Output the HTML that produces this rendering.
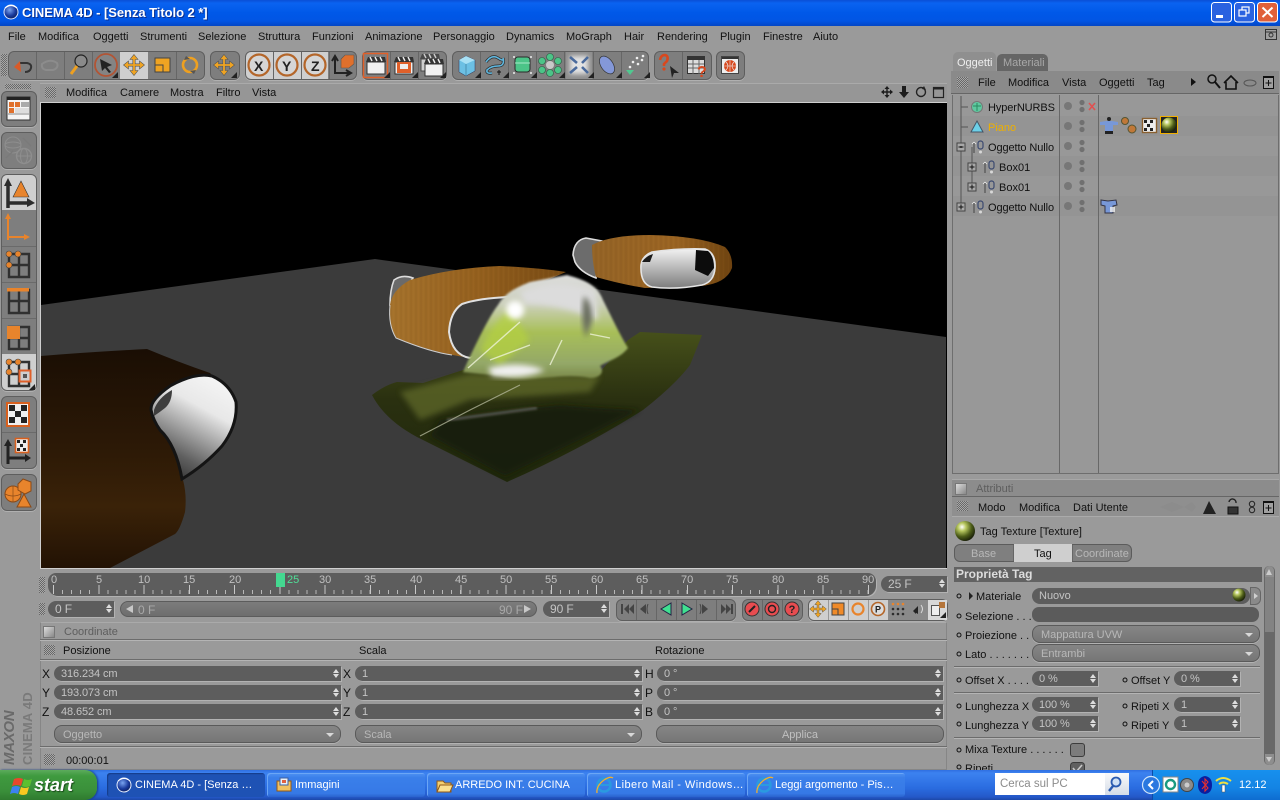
<!DOCTYPE html>
<html><head><meta charset="utf-8"><title>CINEMA 4D</title>
<style>
html,body{margin:0;padding:0;width:1280px;height:800px;overflow:hidden;background:#9a9a9a}
body{position:relative;font:11px/12px "Liberation Sans",sans-serif;color:#111}
i{font-style:normal}
.t{position:absolute;white-space:nowrap;line-height:12px;margin-top:1px}
.b{position:absolute}
.grp{position:absolute;top:51px;height:27px;background:#7e7e7e;border:1px solid #5e5e5e;border-radius:6px;box-shadow:0 1px 0 #b0b0b0}
.lit{position:absolute;background:#cfcfcf}
.grip{position:absolute;background:conic-gradient(#686868 25%,#a8a8a8 0 50%,#686868 0 75%,#a8a8a8 0);background-size:2px 2px}
.f{position:absolute;height:15px;background:#5d5d5d;border-radius:8px 0 0 8px;color:#c4c4c4;line-height:17px;padding-left:7px;box-sizing:border-box;box-shadow:1px 1px 0 #b2b2b2;letter-spacing:-.1px}
.f:before,.f:after{content:"";position:absolute;right:2px;border-left:3px solid transparent;border-right:3px solid transparent}
.f:before{top:3px;border-bottom:4px solid #ddd}
.f:after{top:8px;border-top:4px solid #ddd}
.d{position:absolute;height:18px;background:linear-gradient(#858585,#767676);border:1px solid #5a5a5a;border-radius:8px;color:#b8b8b8;line-height:18px;padding-left:8px;box-sizing:border-box;box-shadow:0 1px 0 #b2b2b2}
.d:after{content:"";position:absolute;right:6px;top:7px;border-left:4px solid transparent;border-right:4px solid transparent;border-top:4px solid #d8d8d8}
.d.n:after{display:none}
.hl{position:absolute;height:1px;background:#6c6c6c;box-shadow:0 1px 0 #b4b4b4}
.vl{position:absolute;width:1px;background:#686868}
.tb{position:absolute;top:773px;height:24px;width:158px;background:linear-gradient(#4f92f2,#3a7fea 20%,#3679e6 85%,#2a62cc);border-radius:3px;color:#fff;font-size:11px;line-height:24px;box-sizing:border-box;padding-left:28px;white-space:nowrap;overflow:hidden;box-shadow:inset 1px 1px 0 #6ba6f6}
.sep{position:absolute;width:1px;background:#666}
</style></head>
<body>
<!-- title bar -->
<div class="b" style="left:0;top:0;width:1280px;height:26px;background:linear-gradient(#0a4fd6,#0a63f0 12%,#0058e8 50%,#0155e4 80%,#0446c4)"></div>
<div class="t" style="left:22px;top:4px;color:#fff;font:bold 13px/16px 'Liberation Sans',sans-serif;letter-spacing:-.05px;text-shadow:1px 1px 0 #0a2f90">CINEMA 4D - [Senza Titolo 2 *]</div>

<!-- menu -->
<i class="t" style="left:8px;top:30px">File</i><i class="t" style="left:38px;top:30px">Modifica</i><i class="t" style="left:93px;top:30px">Oggetti</i><i class="t" style="left:140px;top:30px">Strumenti</i><i class="t" style="left:198px;top:30px">Selezione</i><i class="t" style="left:258px;top:30px">Struttura</i><i class="t" style="left:312px;top:30px">Funzioni</i><i class="t" style="left:365px;top:30px">Animazione</i><i class="t" style="left:433px;top:30px">Personaggio</i><i class="t" style="left:506px;top:30px">Dynamics</i><i class="t" style="left:566px;top:30px">MoGraph</i><i class="t" style="left:624px;top:30px">Hair</i><i class="t" style="left:657px;top:30px">Rendering</i><i class="t" style="left:720px;top:30px">Plugin</i><i class="t" style="left:763px;top:30px">Finestre</i><i class="t" style="left:813px;top:30px">Aiuto</i>

<!-- top toolbar -->
<div class="grip" style="left:1px;top:54px;width:6px;height:22px"></div>
<div class="grp" style="left:8px;width:195px"></div>
<div class="lit" style="left:120px;top:52px;width:28px;height:27px"></div>
<div class="grp" style="left:210px;width:28px"></div>
<div class="grp" style="left:245px;width:110px"></div>
<div class="lit" style="left:246px;top:52px;width:82px;height:27px;border-radius:5px 0 0 5px"></div>
<div class="grp" style="left:362px;width:83px"></div>
<div class="grp" style="left:452px;width:195px"></div>
<div class="lit" style="left:566px;top:52px;width:26px;height:27px;background:#8e8e8e"></div>
<div class="grp" style="left:654px;width:56px"></div>
<div class="grp" style="left:716px;width:27px"></div>
<div class="sep" style="left:36px;top:52px;height:27px"></div><div class="sep" style="left:64px;top:52px;height:27px"></div><div class="sep" style="left:92px;top:52px;height:27px"></div><div class="sep" style="left:176px;top:52px;height:27px"></div>
<div class="sep" style="left:273px;top:52px;height:27px"></div><div class="sep" style="left:301px;top:52px;height:27px"></div><div class="sep" style="left:329px;top:52px;height:27px"></div>
<div class="sep" style="left:390px;top:52px;height:27px"></div><div class="sep" style="left:418px;top:52px;height:27px"></div>
<div class="sep" style="left:480px;top:52px;height:27px"></div><div class="sep" style="left:508px;top:52px;height:27px"></div><div class="sep" style="left:536px;top:52px;height:27px"></div><div class="sep" style="left:564px;top:52px;height:27px"></div><div class="sep" style="left:593px;top:52px;height:27px"></div><div class="sep" style="left:621px;top:52px;height:27px"></div>
<div class="sep" style="left:682px;top:52px;height:27px"></div>

<!-- left toolbar -->
<div class="grip" style="left:5px;top:84px;width:26px;height:5px"></div>
<div class="grp" style="left:1px;top:91px;width:34px;height:34px"></div>
<div class="grp" style="left:1px;top:132px;width:34px;height:35px"></div>
<div class="grp" style="left:1px;top:174px;width:34px;height:215px"></div>
<div class="lit" style="left:2px;top:175px;width:34px;height:35px;border-radius:5px 5px 0 0"></div>
<div class="lit" style="left:2px;top:354px;width:34px;height:36px;border-radius:0 0 5px 5px"></div>
<div class="hl" style="left:2px;top:246px;width:34px;background:#6a6a6a;box-shadow:none"></div><div class="hl" style="left:2px;top:282px;width:34px;background:#6a6a6a;box-shadow:none"></div><div class="hl" style="left:2px;top:318px;width:34px;background:#6a6a6a;box-shadow:none"></div>
<div class="grp" style="left:1px;top:396px;width:34px;height:71px"></div>
<div class="hl" style="left:2px;top:432px;width:34px;background:#6a6a6a;box-shadow:none"></div>
<div class="grp" style="left:1px;top:474px;width:34px;height:35px"></div>

<!-- viewport header -->
<div class="b" style="left:40px;top:83px;width:907px;height:20px;background:#969696;border-top:1px solid #aaa;box-sizing:border-box"></div>
<div class="grip" style="left:45px;top:87px;width:11px;height:11px"></div>
<i class="t" style="left:66px;top:86px">Modifica</i><i class="t" style="left:120px;top:86px">Camere</i><i class="t" style="left:170px;top:86px">Mostra</i><i class="t" style="left:216px;top:86px">Filtro</i><i class="t" style="left:252px;top:86px">Vista</i>

<!-- viewport -->
<svg class="b" style="left:40px;top:102px;border:1px solid #cfcfcf;border-right:0" width="906" height="465" viewBox="41 103 906 465">
<defs>
<linearGradient id="wood" x1="0" y1="0" x2="1" y2="0"><stop offset="0" stop-color="#a5722c"/><stop offset=".5" stop-color="#94601e"/><stop offset="1" stop-color="#774a14"/></linearGradient>
<linearGradient id="woodB" x1="0" y1="0" x2="1" y2="0"><stop offset="0" stop-color="#946426"/><stop offset=".6" stop-color="#9a6422"/><stop offset="1" stop-color="#6e4310"/></linearGradient>
<linearGradient id="woodF" x1="0" y1="0" x2="0" y2="1"><stop offset="0" stop-color="#1a0e04"/><stop offset=".45" stop-color="#2c1906"/><stop offset=".72" stop-color="#3a2208"/><stop offset="1" stop-color="#221204"/></linearGradient>
<linearGradient id="hole" x1=".78" y1=".05" x2=".35" y2="1"><stop offset="0" stop-color="#f4f4f4"/><stop offset=".3" stop-color="#e8e8e8"/><stop offset=".55" stop-color="#a4a4a4"/><stop offset=".8" stop-color="#606060"/><stop offset="1" stop-color="#3a3a3a"/></linearGradient>
<linearGradient id="hole2" x1="0" y1="0" x2="0" y2="1"><stop offset="0" stop-color="#f2f2f2"/><stop offset="1" stop-color="#7c7c7c"/></linearGradient>
<linearGradient id="hill" x1="0" y1="0" x2="0" y2="1"><stop offset="0" stop-color="#dcdcdc"/><stop offset=".28" stop-color="#ccd0bc"/><stop offset=".55" stop-color="#a8bf58"/><stop offset=".85" stop-color="#94a868"/><stop offset="1" stop-color="#7a8848"/></linearGradient>
<linearGradient id="cloth" x1="0" y1="0" x2="0" y2="1"><stop offset="0" stop-color="#46501a"/><stop offset=".45" stop-color="#2a3010"/><stop offset="1" stop-color="#20280c"/></linearGradient>
<pattern id="gr" width="5" height="120" patternUnits="userSpaceOnUse"><rect width="2" height="120" fill="#5a3208" opacity=".1"/><rect x="3" width="1" height="120" fill="#d09a50" opacity=".08"/></pattern>
<filter id="bl" x="-30%" y="-30%" width="160%" height="160%"><feGaussianBlur stdDeviation="3"/></filter>
<filter id="bl1"><feGaussianBlur stdDeviation="1"/></filter>
</defs>
<rect x="41" y="103" width="906" height="465" fill="#000"/>
<path d="M41 305 L375 259 L946 337 V568 H41Z" fill="#3b3b3b"/>
<!-- back chair -->
<path d="M573 255 Q574 240 586 238 L602 241 L596 278 Q580 272 575 262Z" fill="#6c6c6c" stroke="#ddd" stroke-width="1.6"/>
<path d="M592 245 Q610 235 650 235 Q700 236 725 247 Q733 255 732 268 Q726 284 700 286 L645 288 Q620 284 596 277 Q592 262 592 245Z" fill="url(#woodB)"/>
<path d="M592 245 Q610 235 650 235 Q700 236 725 247 Q733 255 732 268 Q726 284 700 286 L645 288 Q620 284 596 277 Q592 262 592 245Z" fill="url(#gr)" opacity=".5"/>
<path d="M641 265 Q642 256 652 252 Q680 248 705 249 Q716 253 715 268 Q714 282 702 285 Q675 290 652 287 Q640 284 641 265Z" fill="url(#hole2)" stroke="#e4e4e4" stroke-width="1.6"/>
<path d="M696 250 L708 251 Q714 256 714 268 L708 276 L695 270Z" fill="#0c0c0c"/>
<path d="M642 262 Q646 256 653 254 L650 262Z" fill="#1a1a1a"/>
<!-- front-mid chair -->
<path d="M390 305 Q390 290 394 280 Q402 274 413 278 L396 302Z" fill="#6a6a6a" stroke="#dcdcdc" stroke-width="1.6"/>
<path d="M390 305 Q392 290 410 280 Q450 268 500 266 Q540 268 566 272 L500 300 L470 358 Q430 352 396 338 Q388 325 390 305Z" fill="url(#wood)"/>
<path d="M390 305 Q392 290 410 280 Q450 268 500 266 Q540 268 566 272 L500 300 L470 358 Q430 352 396 338 Q388 325 390 305Z" fill="url(#gr)" opacity=".5"/>
<path d="M390 305 Q388 325 396 338 Q430 352 452 355" fill="none" stroke="#cfcfcf" stroke-width="1"/>
<path d="M449 332 Q450 312 462 304 Q480 298 510 297 L500 345 L470 358 Q452 355 449 332Z" fill="#3c3c3c" stroke="#e0e0e0" stroke-width="2"/>
<!-- cloth -->
<path d="M372 395 Q385 385 397 382 L423 383 L463 370 L560 370 L600 372 L628 340 L640 332 L702 335 L690 365 Q675 385 643 410 Q580 450 507 482 L417 437 Q385 420 372 395Z" fill="url(#cloth)"/>
<path d="M400 392 L470 374 L600 376 L590 392 L470 400 L420 420Z" fill="#626c2c" opacity=".7" filter="url(#bl)"/>
<path d="M440 420 Q500 410 560 405 Q600 408 640 410 L600 430 L505 476 L430 436Z" fill="#141a08" opacity=".85" filter="url(#bl)"/>
<path d="M447 420 L537 408" stroke="#777" stroke-width="3" opacity=".55" filter="url(#bl1)"/>
<path d="M420 436 L470 410 L520 385" stroke="#b8bca0" stroke-width="1.2" opacity=".75"/>
<path d="M463 372 C475 345 490 315 498 305 C505 293 515 288 530 282 L567 275 C585 280 597 285 603 300 C612 318 620 335 628 348 C620 358 610 360 600 366 C605 372 600 378 590 378 C560 372 530 384 500 376Z" fill="url(#hill)" filter="url(#bl1)"/>
<path d="M480 350 Q495 320 510 310 L530 340 L500 365Z" fill="#b4d040" opacity=".75" filter="url(#bl)"/>
<path d="M520 292 Q555 276 595 290 L598 320 Q560 304 525 304Z" fill="#dcdcdc" filter="url(#bl)"/>
<path d="M584 296 Q592 302 592 320 L586 338 Q580 318 584 296Z" fill="#666a5c" filter="url(#bl)"/>
<path d="M488 368 Q520 360 545 370 Q525 380 492 376Z" fill="#f0f0f0" filter="url(#bl)"/>
<path d="M468 368 L520 322 M530 345 L490 360 M550 365 L562 340 M610 338 L590 334" stroke="#eef2d8" stroke-width="1.4" fill="none" opacity=".8"/>
<circle cx="515" cy="310" r="9" fill="#fff" filter="url(#bl)"/>
<!-- foreground chair -->
<path d="M41 356 Q90 352 147 349 Q178 362 210 373 L236 400 Q235 440 205 462 L183 480 Q187 495 185 512 Q180 530 175 534 L110 568 H41Z" fill="url(#woodF)"/>
<path d="M151 410 Q150 400 170 386 Q195 372 212 376 Q230 384 236 402 Q238 425 222 446 Q205 465 182 479 Q176 445 160 430 Q153 420 151 410Z" fill="url(#hole)" stroke="#141414" stroke-width="3"/>
<path d="M154 410 Q158 398 172 390 Q172 402 165 408 Q160 412 154 416Z" fill="#3e3e3e"/>
</svg>

<!-- right top panel -->
<div class="b" style="left:953px;top:52px;width:43px;height:20px;background:#8f8f8f;border-radius:5px 5px 0 0"></div>
<div class="b" style="left:997px;top:54px;width:51px;height:18px;background:#656565;border-radius:5px 5px 0 0"></div>
<i class="t" style="left:957px;top:56px;color:#eee">Oggetti</i><i class="t" style="left:1003px;top:56px;color:#a8a8a8">Materiali</i>
<div class="b" style="left:951px;top:71px;width:328px;height:23px;background:#8a8a8a;border-bottom:1px solid #666;box-sizing:border-box"></div>
<div class="grip" style="left:957px;top:77px;width:11px;height:11px"></div>
<i class="t" style="left:978px;top:76px">File</i><i class="t" style="left:1008px;top:76px">Modifica</i><i class="t" style="left:1062px;top:76px">Vista</i><i class="t" style="left:1099px;top:76px">Oggetti</i><i class="t" style="left:1147px;top:76px">Tag</i>
<div class="b" style="left:952px;top:95px;width:327px;height:379px;background:#989898;border:1px solid #6e6e6e;border-top:0;box-sizing:border-box"></div>
<div class="b" style="left:953px;top:116px;width:325px;height:20px;background:#949494"></div>
<div class="b" style="left:953px;top:156px;width:325px;height:20px;background:#949494"></div>
<div class="b" style="left:953px;top:196px;width:325px;height:20px;background:#949494"></div>
<div class="vl" style="left:1059px;top:95px;height:378px"></div><div class="vl" style="left:1098px;top:95px;height:378px"></div>
<i class="t" style="left:988px;top:101px;letter-spacing:-.1px">HyperNURBS</i>
<i class="t" style="left:988px;top:121px;color:#eeb000">Piano</i>
<i class="t" style="left:988px;top:141px;letter-spacing:-.1px">Oggetto Nullo</i>
<i class="t" style="left:999px;top:161px">Box01</i>
<i class="t" style="left:999px;top:181px">Box01</i>
<i class="t" style="left:988px;top:201px;letter-spacing:-.1px">Oggetto Nullo</i>

<!-- attributes panel -->
<div class="b" style="left:952px;top:479px;width:327px;height:18px;background:#8c8c8c;border-top:1px solid #a8a8a8;border-bottom:1px solid #666;box-sizing:border-box"></div>
<div class="b" style="left:955px;top:483px;width:10px;height:10px;background:linear-gradient(135deg,#ddd,#888);border:1px solid #777"></div>
<i class="t" style="left:976px;top:482px;color:#5e5e5e">Attributi</i>
<div class="b" style="left:952px;top:497px;width:327px;height:20px;background:#8f8f8f;border-bottom:1px solid #aaa;box-sizing:border-box"></div>
<div class="grip" style="left:957px;top:501px;width:11px;height:10px"></div>
<i class="t" style="left:978px;top:501px">Modo</i><i class="t" style="left:1019px;top:501px">Modifica</i><i class="t" style="left:1073px;top:501px">Dati Utente</i>
<i class="t" style="left:980px;top:525px">Tag Texture [Texture]</i>
<div class="b" style="left:954px;top:544px;width:178px;height:18px;background:#7f7f7f;border:1px solid #5c5c5c;border-radius:6px;box-sizing:border-box"></div>
<div class="b" style="left:1014px;top:544px;width:58px;height:18px;background:#cfcfcf"></div>
<div class="sep" style="left:1013px;top:545px;height:16px"></div><div class="sep" style="left:1072px;top:545px;height:16px"></div>
<i class="t" style="left:971px;top:547px;color:#b8b8b8">Base</i><i class="t" style="left:1034px;top:547px">Tag</i><i class="t" style="left:1075px;top:547px;color:#b8b8b8">Coordinate</i>
<div class="b" style="left:954px;top:567px;width:308px;height:15px;background:#626262"></div>
<i class="t" style="left:956px;top:567px;color:#ddd;font-weight:bold;font-size:12px">Proprietà Tag</i>
<!-- scrollbar -->
<div class="b" style="left:1264px;top:566px;width:11px;height:199px;background:#686868;border-radius:5px"></div>
<div class="b" style="left:1265px;top:577px;width:9px;height:55px;background:#838383"></div>
<div class="b" style="left:1265px;top:566px;width:9px;height:11px;background:#8e8e8e;border-radius:5px 5px 0 0"></div>
<div class="b" style="left:1265px;top:754px;width:9px;height:11px;background:#8e8e8e;border-radius:0 0 5px 5px"></div>

<i class="t" style="left:976px;top:590px">Materiale</i>
<div class="b" style="left:1032px;top:588px;width:218px;height:16px;border-radius:8px;background:#5d5d5d;color:#c4c4c4;line-height:17px;padding-left:7px;box-sizing:border-box">Nuovo</div>
<div class="b" style="left:1250px;top:587px;width:11px;height:18px;background:#8a8a8a;border:1px solid #666;border-radius:0 6px 6px 0;box-sizing:border-box"></div>
<i class="t" style="left:965px;top:610px">Selezione . . .</i>
<div class="b" style="left:1032px;top:607px;width:227px;height:15px;background:#5b5b5b;border-radius:7px"></div>
<i class="t" style="left:965px;top:629px">Proiezione . .</i>
<div class="d" style="left:1032px;top:625px;width:228px">Mappatura UVW</div>
<i class="t" style="left:965px;top:648px">Lato . . . . . . .</i>
<div class="d" style="left:1032px;top:644px;width:228px">Entrambi</div>
<div class="hl" style="left:954px;top:666px;width:306px"></div>
<i class="t" style="left:965px;top:674px">Offset X . . . .</i><div class="f" style="left:1032px;top:671px;width:66px">0 %</div>
<i class="t" style="left:1131px;top:674px">Offset Y</i><div class="f" style="left:1174px;top:671px;width:66px">0 %</div>
<div class="hl" style="left:954px;top:692px;width:306px"></div>
<i class="t" style="left:965px;top:700px">Lunghezza X</i><div class="f" style="left:1032px;top:697px;width:66px">100 %</div>
<i class="t" style="left:1131px;top:700px">Ripeti X</i><div class="f" style="left:1174px;top:697px;width:66px">1</div>
<i class="t" style="left:965px;top:719px">Lunghezza Y</i><div class="f" style="left:1032px;top:716px;width:66px">100 %</div>
<i class="t" style="left:1131px;top:719px">Ripeti Y</i><div class="f" style="left:1174px;top:716px;width:66px">1</div>
<div class="hl" style="left:954px;top:737px;width:306px"></div>
<i class="t" style="left:965px;top:743px">Mixa Texture . . . . . .</i>
<div class="b" style="left:1070px;top:743px;width:13px;height:12px;background:#7c7c7c;border:1px solid #3c3c3c;border-radius:3px"></div>
<i class="t" style="left:965px;top:762px">Ripeti</i>
<svg class="b" style="left:1070px;top:762px" width="15" height="14"><rect x=".5" y=".5" width="14" height="13" rx="3" fill="#606060" stroke="#3c3c3c"/><path d="M3 6 6 10 12 3" fill="none" stroke="#c8c8c8" stroke-width="1.600"/></svg>

<!-- timeline -->
<div class="grip" style="left:39px;top:577px;width:6px;height:16px"></div>
<div class="b" style="left:48px;top:573px;width:828px;height:23px;background:#5d5d5d;border-radius:8px 8px 10px 10px;box-shadow:1px 1px 0 #b2b2b2"></div>
<div class="b" style="left:53px;top:590px;width:816px;height:4px;background:repeating-linear-gradient(90deg,#b8b8b8 0 1px,transparent 1px 9.05px)"></div>
<div class="b" style="left:53px;top:585px;width:816px;height:9px;background:repeating-linear-gradient(90deg,#c8c8c8 0 1px,transparent 1px 45.27px)"></div>
<div class="b" style="left:276px;top:573px;width:9px;height:14px;background:#44d890"></div>
<i class="t" style="left:51px;top:573px;color:#c0c0c0">0</i><i class="t" style="left:96px;top:573px;color:#c0c0c0">5</i><i class="t" style="left:138px;top:573px;color:#c0c0c0">10</i><i class="t" style="left:183px;top:573px;color:#c0c0c0">15</i><i class="t" style="left:229px;top:573px;color:#c0c0c0">20</i><i class="t" style="left:287px;top:573px;color:#50e098">25</i><i class="t" style="left:319px;top:573px;color:#c0c0c0">30</i><i class="t" style="left:364px;top:573px;color:#c0c0c0">35</i><i class="t" style="left:410px;top:573px;color:#c0c0c0">40</i><i class="t" style="left:455px;top:573px;color:#c0c0c0">45</i><i class="t" style="left:500px;top:573px;color:#c0c0c0">50</i><i class="t" style="left:545px;top:573px;color:#c0c0c0">55</i><i class="t" style="left:591px;top:573px;color:#c0c0c0">60</i><i class="t" style="left:636px;top:573px;color:#c0c0c0">65</i><i class="t" style="left:681px;top:573px;color:#c0c0c0">70</i><i class="t" style="left:726px;top:573px;color:#c0c0c0">75</i><i class="t" style="left:772px;top:573px;color:#c0c0c0">80</i><i class="t" style="left:817px;top:573px;color:#c0c0c0">85</i><i class="t" style="left:862px;top:573px;color:#c0c0c0">90</i>
<div class="f" style="left:881px;top:576px;width:66px;height:16px;line-height:17px;font-size:12px">25 F</div>
<div class="grip" style="left:39px;top:603px;width:6px;height:12px"></div>
<div class="f" style="left:48px;top:601px;width:66px;height:16px;line-height:17px;font-size:12px">0 F</div>
<div class="b" style="left:120px;top:601px;width:417px;height:16px;background:linear-gradient(#7c7c7c,#6e6e6e);border:1px solid #5c5c5c;border-radius:8px;box-sizing:border-box"></div>
<i class="t" style="left:138px;top:603px;color:#a8a8a8;font-size:12px">0 F</i><i class="t" style="left:499px;top:603px;color:#a8a8a8;font-size:12px">90 F</i>
<div class="f" style="left:543px;top:601px;width:66px;height:16px;line-height:17px;font-size:12px">90 F</div>
<div class="grp" style="left:616px;top:599px;width:118px;height:20px"></div>
<div class="grp" style="left:742px;top:599px;width:59px;height:20px"></div>
<div class="grp" style="left:808px;top:599px;width:138px;height:20px;background:#8a8a8a"></div>
<div class="lit" style="left:809px;top:600px;width:79px;height:20px;border-radius:5px 0 0 5px"></div>
<div class="lit" style="left:928px;top:600px;width:19px;height:20px;background:#d8d8d8"></div>
<div class="sep" style="left:636px;top:600px;height:20px"></div><div class="sep" style="left:656px;top:600px;height:20px"></div><div class="sep" style="left:676px;top:600px;height:20px"></div><div class="sep" style="left:696px;top:600px;height:20px"></div><div class="sep" style="left:716px;top:600px;height:20px"></div><div class="sep" style="left:762px;top:600px;height:20px"></div><div class="sep" style="left:782px;top:600px;height:20px"></div><div class="sep" style="left:828px;top:600px;height:20px;background:#999"></div><div class="sep" style="left:848px;top:600px;height:20px;background:#999"></div><div class="sep" style="left:868px;top:600px;height:20px;background:#999"></div>

<!-- coords -->
<div class="b" style="left:40px;top:622px;width:907px;height:148px;border:1px solid #868686;border-top:1px solid #aaa;box-sizing:border-box"></div>
<div class="b" style="left:43px;top:626px;width:10px;height:10px;background:linear-gradient(135deg,#ddd,#888);border:1px solid #777"></div>
<i class="t" style="left:64px;top:625px;color:#5e5e5e">Coordinate</i>
<div class="hl" style="left:40px;top:639px;width:907px"></div>
<div class="grip" style="left:44px;top:645px;width:11px;height:10px"></div>
<i class="t" style="left:63px;top:644px">Posizione</i><i class="t" style="left:359px;top:644px">Scala</i><i class="t" style="left:655px;top:644px">Rotazione</i>
<div class="hl" style="left:40px;top:659px;width:907px"></div>
<i class="t" style="left:42px;top:667px;font-size:12px">X</i><i class="t" style="left:42px;top:686px;font-size:12px">Y</i><i class="t" style="left:42px;top:705px;font-size:12px">Z</i>
<i class="t" style="left:343px;top:667px;font-size:12px">X</i><i class="t" style="left:343px;top:686px;font-size:12px">Y</i><i class="t" style="left:343px;top:705px;font-size:12px">Z</i>
<i class="t" style="left:645px;top:667px;font-size:12px">H</i><i class="t" style="left:645px;top:686px;font-size:12px">P</i><i class="t" style="left:645px;top:705px;font-size:12px">B</i>
<div class="f" style="left:54px;top:666px;width:287px">316.234 cm</div><div class="f" style="left:54px;top:685px;width:287px">193.073 cm</div><div class="f" style="left:54px;top:704px;width:287px">48.652 cm</div>
<div class="f" style="left:355px;top:666px;width:287px">1</div><div class="f" style="left:355px;top:685px;width:287px">1</div><div class="f" style="left:355px;top:704px;width:287px">1</div>
<div class="f" style="left:657px;top:666px;width:286px">0 °</div><div class="f" style="left:657px;top:685px;width:286px">0 °</div><div class="f" style="left:657px;top:704px;width:286px">0 °</div>
<div class="d" style="left:54px;top:725px;width:287px">Oggetto</div>
<div class="d" style="left:355px;top:725px;width:287px">Scala</div>
<div class="d n" style="left:656px;top:725px;width:288px;text-align:center;padding:0;color:#c0c0c0"><span>Applica</span></div>
<div class="hl" style="left:40px;top:746px;width:907px"></div>
<div class="grip" style="left:44px;top:754px;width:11px;height:11px"></div>
<i class="t" style="left:66px;top:754px">00:00:01</i>

<!-- maxon logo -->
<div class="t" style="left:-25px;top:722px;width:70px;transform:rotate(-90deg);font:italic bold 15px/14px 'Liberation Sans',sans-serif;color:#6a6a6a;letter-spacing:-.3px;text-align:left">MAXON</div>
<div class="t" style="left:-10px;top:719px;width:76px;transform:rotate(-90deg);font:bold 13px/14px 'Liberation Sans',sans-serif;color:#7a7a7a;letter-spacing:.2px">CINEMA 4D</div>

<!-- taskbar -->
<div class="b" style="left:0;top:770px;width:1280px;height:30px;background:linear-gradient(#2f6fe0,#3c82f0 10%,#2a6ce0 60%,#2458c8 90%,#1c48a8)"></div>
<div class="b" style="left:0;top:770px;width:97px;height:30px;background:linear-gradient(#5cab5c,#3f9a3f 20%,#3a8f3a 70%,#2f7a2f);border-radius:0 12px 12px 0;box-shadow:1px 0 2px #143a80"></div>
<div class="t" style="left:34px;top:774px;color:#fff;font:italic bold 18px/20px 'Liberation Sans',sans-serif;text-shadow:1px 1px 1px #1a4a1a">start</div>
<div class="tb" style="left:107px;background:#1e52b4;box-shadow:inset 1px 1px 1px #163c88">CINEMA 4D - [Senza …</div>
<div class="tb" style="left:267px">Immagini</div>
<div class="tb" style="left:427px">ARREDO INT. CUCINA</div>
<div class="tb" style="left:587px;letter-spacing:.45px">Libero Mail - Windows…</div>
<div class="tb" style="left:747px">Leggi argomento - Pis…</div>
<div class="b" style="left:995px;top:773px;width:110px;height:22px;background:#fff"></div>
<i class="t" style="left:1000px;top:777px;color:#8c8c8c;font-size:11.5px">Cerca sul PC</i>
<div class="b" style="left:1105px;top:773px;width:24px;height:22px;background:linear-gradient(#fafafa,#d4dce8)"></div>
<div class="b" style="left:1152px;top:770px;width:128px;height:30px;background:linear-gradient(#1790ee,#1484e4 60%,#0e6cd0);box-shadow:inset 1px 0 0 #0c4ca8"></div>
<i class="t" style="left:1239px;top:778px;color:#fff">12.12</i>

<!-- ICON OVERLAY -->
<svg class="b" style="left:0;top:0;pointer-events:none" width="1280" height="800" viewBox="0 0 1280 800">
<defs>
<path id="mv" d="M0-10.5 4-5.5H1.2V-1.2H5.500V-4L10.500 0 5.500 4V1.200H1.200V5.500H4L0 10.500-4 5.500H-1.200V1.200H-5.500V4L-10.500 0-5.500-4V-1.200H-1.200V-5.500H-4Z" fill="#f0a422" stroke="#555" stroke-width=".6"/>
<path id="mvk" d="M0-6 2.500-3H.7V-.7H3V-2.500L6 0 3 2.500V.7H.7V3H2.500L0 6-2.500 3H-.7V.7H-3V2.500L-6 0-3-2.500V-.7H-.7V-3H-2.500Z" fill="#1c1c1c"/>
<path id="crn" d="M0 0 6 0 6-6Z" fill="#222"/>
<radialGradient id="sph" cx=".35" cy=".3" r=".8"><stop offset="0" stop-color="#fff"/><stop offset=".25" stop-color="#b8c860"/><stop offset=".6" stop-color="#4c5c18"/><stop offset="1" stop-color="#0c0f04"/></radialGradient>
<radialGradient id="glb" cx=".4" cy=".35" r=".7"><stop offset="0" stop-color="#7aa4f0"/><stop offset=".6" stop-color="#1a3a9c"/><stop offset="1" stop-color="#0a1c58"/></radialGradient>
<g id="nul"><path d="M-5-4V6" stroke="#444" stroke-width="1" fill="none"/><path d="M-5-5-7-3M-5-5-3-3" stroke="#eee" stroke-width=".8"/><rect x="-1" y="-6" width="5" height="8" rx="2.400" fill="none" stroke="#3c4a70" stroke-width="1.200"/><circle cx="1.500" cy="5" r="1.500" fill="#d8d8d8"/></g>
<g id="plus"><rect x="-4" y="-4" width="8" height="8" fill="#a8a8a8" stroke="#444"/><path d="M-2.500 0H2.500M0-2.500V2.500" stroke="#111"/></g>
<g id="dots"><circle cx="1068" cy="0" r="4" fill="#777"/><circle cx="1082" cy="-3.500" r="2.600" fill="#707070"/><circle cx="1082" cy="3.500" r="2.600" fill="#707070"/></g>
<g id="clap"><rect x="-9" y="-4" width="18" height="12" fill="#f0f0f0" stroke="#333"/><path d="M-10-4-8-9 9-9 10-4Z" fill="#333"/><path d="M-6-9-4-5M-1-9 1-5M4-9 6-5" stroke="#eee" stroke-width="1.400"/></g>
<filter id="glow" x="-40%" y="-40%" width="180%" height="180%"><feGaussianBlur stdDeviation="2.500"/></filter>
</defs>

<!-- title icon -->
<circle cx="11" cy="12" r="7" fill="url(#glb)" stroke="#dfe8ff"/>
<path d="M5 8Q11 3 17 8" fill="none" stroke="#fff" stroke-width="1.200"/>
<!-- window buttons -->
<rect x="1211.500" y="2.500" width="20" height="19.500" rx="3" fill="#2a62e0" stroke="#fff"/><rect x="1216" y="15" width="7" height="3" fill="#fff"/>
<rect x="1234.500" y="2.500" width="20" height="19.500" rx="3" fill="#2a62e0" stroke="#fff"/><rect x="1242" y="7" width="7" height="6" fill="none" stroke="#fff" stroke-width="1.200"/><rect x="1239" y="10" width="7" height="6" fill="#2a62e0" stroke="#fff" stroke-width="1.200"/>
<rect x="1257.500" y="2.500" width="20" height="19.500" rx="3" fill="#e0603a" stroke="#fff"/><path d="M1262.500 7.500 1272.500 17M1272.500 7.500 1262.500 17" stroke="#fff" stroke-width="2"/>
<!-- menu right icon -->
<rect x="1265.500" y="29.500" width="11" height="10" fill="#a0a0a0" stroke="#333"/><path d="M1265 32H1277" stroke="#333"/><circle cx="1271" cy="35" r="2" fill="none" stroke="#333"/>

<!-- toolbar icons -->
<path d="M19 63H27Q32 64 31 68Q30 72 25 72" fill="none" stroke="#333" stroke-width="2"/><path d="M14 67 20 61 21 72Z" fill="#d85a28"/>
<path d="M42 64Q50 58 57 63 59 68 53 70H46Q41 69 42 64Z" fill="none" stroke="#8c8c8c" stroke-width="2"/>
<circle cx="81" cy="61" r="6" fill="#8a8a8a" stroke="#222" stroke-width="1.200"/><path d="M77 66 71 74" stroke="#eea020" stroke-width="3"/>
<circle cx="106" cy="65" r="11" fill="#848484" stroke="#b25434" stroke-width="1.800"/><path d="M100 59 112 65 107 67 111 72 109 73 105 68 102 71Z" fill="#222"/><use href="#crn" x="112" y="78"/>
<use href="#mv" x="134" y="65"/>
<rect x="155" y="58" width="15" height="14" fill="#f0a422" stroke="#444"/><path d="M155 65H163V72" fill="none" stroke="#444"/>
<circle cx="190" cy="65" r="7" fill="none" stroke="#eea020" stroke-width="2.600"/><path d="M184 60 186 56 190 59ZM196 70 194 74 190 71Z" fill="#555"/>
<use href="#mv" x="224" y="65"/><use href="#crn" x="231" y="78"/>
<circle cx="259" cy="65" r="10.500" fill="#d6d6d6" stroke="#b4662a" stroke-width="2.200"/><circle cx="287" cy="65" r="10.500" fill="#d6d6d6" stroke="#b4662a" stroke-width="2.200"/><circle cx="315" cy="65" r="10.500" fill="#d6d6d6" stroke="#b4662a" stroke-width="2.200"/>
<path d="M335 58V73H349M332 61 335 56 338 61M346 70 351 73 346 76" fill="none" stroke="#222" stroke-width="2"/><path d="M341 59 345 55 354 55V64L349 68 341 68Z" fill="#e0702c" stroke="#555" stroke-width=".6"/>
<rect x="363.500" y="53.500" width="24" height="24" fill="none" stroke="#e0602a" stroke-width="1.500"/><use href="#clap" x="376" y="66"/>
<use href="#clap" x="404" y="66"/><rect x="397" y="62" width="14" height="11" fill="#e0602a"/><rect x="400" y="64" width="8" height="5" fill="#eee"/>
<use href="#clap" x="430" y="63" opacity=".7"/><use href="#clap" x="434" y="68"/><use href="#crn" x="440" y="78"/><use href="#crn" x="412" y="78"/><use href="#crn" x="384" y="78"/>
<path d="M466 56 475 60V71L466 76 459 72V60Z" fill="#6cc0e4" stroke="#335" stroke-width=".5"/><path d="M459 60 466 64 475 60 466 56Z" fill="#a8e0f4"/><path d="M466 64V76" stroke="#4a90b0"/>
<path d="M486 62Q492 54 498 58T503 58M503 58Q505 66 498 66T487 70Q486 74 492 73" fill="none" stroke="#2c2c2c" stroke-width="3"/><path d="M486 62Q492 54 498 58T503 58M503 58Q505 66 498 66T487 70Q486 74 492 73" fill="none" stroke="#60b8e0" stroke-width="1.600"/><path d="M497 72H501M499 70V75" stroke="#111"/>
<rect x="515" y="57" width="15" height="15" rx="3" fill="#4cc488" stroke="#2a2a2a"/><path d="M515 63H530" stroke="#a8e8c8"/><circle cx="514" cy="57" r="1" fill="#eee"/><circle cx="531" cy="57" r="1" fill="#eee"/><circle cx="514" cy="73" r="1" fill="#eee"/><circle cx="531" cy="73" r="1" fill="#eee"/>
<g fill="#4cc488" stroke="#2a5a40" stroke-width=".6"><circle cx="550" cy="57" r="3.500"/><circle cx="558" cy="61" r="3.500"/><circle cx="558" cy="70" r="3.500"/><circle cx="550" cy="73" r="3.500"/><circle cx="542" cy="70" r="3.500"/><circle cx="542" cy="61" r="3.500"/></g><circle cx="550" cy="65" r="4" fill="#c8c8c8"/>
<rect x="570" y="56" width="18" height="18" fill="#f2f2f2" opacity=".85" filter="url(#glow)"/><path d="M570 57 577 63M588 57 582 63M570 73 577 67M588 73 582 67" stroke="#4a6a9c" stroke-width="2.600"/>
<ellipse cx="607" cy="65" rx="6" ry="10" transform="rotate(-35 607 65)" fill="#8498d8" stroke="#333" stroke-width=".7"/>
<g fill="#f0f0f0"><circle cx="637" cy="58" r="1.300"/><circle cx="642" cy="60" r="1.300"/><circle cx="633" cy="62" r="1.300"/><circle cx="638" cy="64" r="1.300"/><circle cx="630" cy="67" r="1.300"/><circle cx="643" cy="56" r="1.300"/></g><path d="M626 70H634L630 75Z" fill="#50c890"/>
<use href="#crn" x="475" y="78"/><use href="#crn" x="503" y="78"/><use href="#crn" x="531" y="78"/><use href="#crn" x="559" y="78"/><use href="#crn" x="588" y="78"/><use href="#crn" x="616" y="78"/><use href="#crn" x="644" y="78"/>
<path d="M660 60Q661 55 665 55 669 56 667 61L664 64V66" fill="none" stroke="#d8481e" stroke-width="2.600"/><circle cx="664" cy="69" r="1.600" fill="#d8481e"/><path d="M670 66 679 73 674 73 672 78Z" fill="#222"/>
<rect x="687.500" y="56.500" width="17" height="17" fill="#ddd" stroke="#333"/><rect x="688" y="57" width="16" height="3" fill="#333"/><path d="M688 64H704M688 68H704M693 60V74M699 60V74" stroke="#666"/><text x="697" y="77" font-family="Liberation Sans" font-size="16" font-weight="bold" fill="#d8481e">?</text>
<rect x="721.500" y="56.500" width="17" height="17" fill="#eee" stroke="#444"/><rect x="722" y="57" width="16" height="2" fill="#333"/><circle cx="730" cy="66" r="6" fill="#d8481e"/><path d="M724 66H736M730 60V72M726 62Q730 66 726 70M734 62Q730 66 734 70" fill="none" stroke="#eee" stroke-width=".6"/>

<!-- left icons -->
<rect x="7" y="97" width="23" height="23" fill="#f4f4f4" stroke="#333"/><rect x="7" y="97" width="23" height="3" fill="#222"/><rect x="9" y="102" width="5" height="5" fill="#e0702c"/><rect x="15" y="102" width="5" height="5" fill="#e0702c"/><rect x="9" y="108" width="5" height="5" fill="#e0702c"/><rect x="21" y="102" width="8" height="5" fill="#aaa"/><rect x="15" y="108" width="14" height="5" fill="#ddd"/><path d="M8 114H29" stroke="#888"/>
<g fill="none" stroke="#8e8e8e"><circle cx="13" cy="145" r="8"/><ellipse cx="13" cy="145" rx="8" ry="3"/><circle cx="24" cy="156" r="7.500" stroke-width="1.400"/><ellipse cx="24" cy="156" rx="3.500" ry="7.500"/><path d="M17 156H31"/></g><path d="M23 138 31 146M6 158 13 151" stroke="#7a7a7a" stroke-width="1.500"/>
<path d="M8 208V182M8 203H30" stroke="#2c2c2c" stroke-width="3.500" fill="none"/><path d="M4 186 8 178 12 186ZM27 198 35 203 27 207Z" fill="#2c2c2c"/><path d="M13 197 21 181 29 197Z" fill="#e8842c" stroke="#333" stroke-width=".6"/>
<path d="M8 240V218M8 237H28" stroke="#e8842c" stroke-width="2" fill="none"/><path d="M5 219 8 213 11 219ZM24 234 30 237 24 240Z" fill="#e8842c"/>
<g fill="none" stroke="#303030" stroke-width="2.400"><path d="M9 254H29V277H9ZM19 254V277M9 265H29"/><path d="M9 290H29V313H9ZM19 290V313M9 301H29"/><path d="M9 327H29V349H9ZM19 327V349M9 338H29"/><path d="M9 362H29V386H9ZM19 362V386M9 374H29"/></g>
<g fill="#e8842c" stroke="#444" stroke-width=".6"><circle cx="9" cy="254" r="3"/><circle cx="18" cy="254" r="3"/><circle cx="9" cy="265" r="3"/><circle cx="9" cy="362" r="3"/><circle cx="18" cy="362" r="3"/><circle cx="9" cy="372" r="3"/></g>
<rect x="7" y="288" width="22" height="3.500" fill="#e8842c"/>
<rect x="7" y="326" width="13" height="13" fill="#e8842c"/>
<rect x="19.500" y="370.500" width="11" height="11" fill="#cfcfcf" stroke="#e0602a" stroke-width="2"/><rect x="23" y="374" width="4" height="4" fill="#555"/><path d="M35 384V390H29Z" fill="#222"/>
<rect x="7" y="403" width="22" height="23" fill="#f0f0f0" stroke="#d8601e" stroke-width="2"/><g fill="#222"><rect x="9" y="405" width="6" height="6"/><rect x="21" y="405" width="6" height="6"/><rect x="15" y="411" width="6" height="6"/><rect x="9" y="417" width="6" height="6"/><rect x="21" y="417" width="6" height="6"/></g>
<path d="M8 464V443M8 458H27" stroke="#222" stroke-width="3" fill="none"/><path d="M4 446 8 439 12 446ZM25 454 31 458 25 462Z" fill="#222"/><rect x="15.500" y="438.500" width="13" height="14" fill="#eee" stroke="#d8601e" stroke-width="1.600"/><g fill="#222"><rect x="17" y="440" width="3" height="3"/><rect x="23" y="440" width="3" height="3"/><rect x="20" y="444" width="3" height="3"/><rect x="17" y="448" width="3" height="3"/><rect x="23" y="448" width="3" height="3"/></g>
<circle cx="13" cy="494" r="8" fill="#e8842c" stroke="#8a4a18"/><path d="M5 494Q13 498 21 494M13 486V502" fill="none" stroke="#8a4a18" stroke-width=".7"/><path d="M18 484 23 479 31 482V491L25 494 18 490Z" fill="#e8842c" stroke="#8a4a18"/><path d="M24 494 17 507H31Z" fill="#e8842c" stroke="#8a4a18"/>

<!-- viewport nav icons -->
<use href="#mvk" x="887" y="92"/>
<path d="M902 86H906V92H909L904 98 899 92H902Z" fill="#1c1c1c"/>
<circle cx="921" cy="92" r="4.500" fill="none" stroke="#222" stroke-width="1.400"/><path d="M924 86 926 90 922 89Z" fill="#222"/>
<rect x="933.500" y="87.500" width="10" height="10" fill="none" stroke="#222" stroke-width="1.200"/><rect x="933" y="87" width="11" height="2.500" fill="#222"/>

<!-- right menu icons -->
<path d="M1191 78 1196 82 1191 86Z" fill="#111"/>
<circle cx="1212" cy="79" r="4" fill="none" stroke="#111" stroke-width="1.500"/><path d="M1215 82 1220 88" stroke="#111" stroke-width="2"/>
<path d="M1224 83 1231 76 1238 83M1226 82V89H1236V82" fill="none" stroke="#111" stroke-width="1.600"/>
<ellipse cx="1250" cy="83" rx="6" ry="3" fill="none" stroke="#555"/>
<rect x="1263.500" y="76.500" width="10" height="12" fill="#a0a0a0" stroke="#111"/><rect x="1263" y="76" width="11" height="2" fill="#111"/><path d="M1265.500 83H1271.500M1268.500 80V86" stroke="#111"/>

<!-- tree lines -->
<path d="M961 96V147M961 147V207M972 147V187M961 107H968M961 127H968" fill="none" stroke="#555"/>
<circle cx="977" cy="107" r="5.500" fill="#60c8a0" stroke="#777"/><path d="M973 106H981M977 103V111" stroke="#2a8a60"/>
<path d="M977 121 983 132H971Z" fill="#6cd0e8" stroke="#456"/>
<use href="#plus" x="961" y="147"/><rect x="960" y="144" width="2" height="2" fill="#a8a8a8"/><rect x="960" y="148" width="2" height="2" fill="#a8a8a8"/>
<use href="#nul" x="979" y="147"/><use href="#plus" x="972" y="167"/><use href="#nul" x="990" y="167"/><use href="#plus" x="972" y="187"/><use href="#nul" x="990" y="187"/><use href="#plus" x="961" y="207"/><use href="#nul" x="979" y="207"/>
<use href="#dots" y="106"/><use href="#dots" y="126"/><use href="#dots" y="146"/><use href="#dots" y="166"/><use href="#dots" y="186"/><use href="#dots" y="206"/>
<path d="M1089 103 1095 110M1095 103 1089 110" stroke="#e05050" stroke-width="1.600"/>
<!-- tags -->
<circle cx="1109" cy="119" r="2" fill="#222"/><path d="M1100 122 1106 121H1112L1118 122V125L1113 125 1113 132H1105L1105 125 1100 125Z" fill="#7898d8"/><rect x="1105" y="131" width="8" height="3" fill="#222"/>
<circle cx="1125" cy="121" r="3.500" fill="#c07838" stroke="#553"/><circle cx="1132" cy="129" r="4" fill="#c07838" stroke="#553"/>
<rect x="1142.500" y="118.500" width="14" height="14" fill="#eee" stroke="#8a6030" stroke-width="1.400"/><g fill="#222"><rect x="1144" y="120" width="3" height="3"/><rect x="1150" y="120" width="3" height="3"/><rect x="1147" y="124" width="3" height="3"/><rect x="1144" y="128" width="3" height="3"/><rect x="1150" y="128" width="3" height="3"/></g>
<rect x="1160.500" y="116.500" width="17" height="17" fill="#222" stroke="#f0b000"/><circle cx="1169" cy="125" r="7.500" fill="url(#sph)"/>
<path d="M1101 200 1108 201 1116 200 1117 205 1113 206 1113 213H1105L1105 206 1101 205Z" fill="#7898d8" stroke="#334"/><rect x="1110" y="207" width="5" height="5" fill="#eee" opacity=".8"/>

<!-- attrib bar icons -->
<path d="M1160 507 1172 502 1184 507 1172 512ZM1184 507 1192 502 1196 507 1192 512Z" fill="#8a8a8a" opacity=".6"/>
<path d="M1209 501 1216 514H1203Z" fill="#222"/>
<path d="M1229 502A3.500 3.500 0 0 1 1236 503" fill="none" stroke="#222" stroke-width="1.400"/><rect x="1228" y="507" width="10" height="7" fill="#333" stroke="#111"/>
<circle cx="1252" cy="504" r="2.700" fill="none" stroke="#222"/><circle cx="1252" cy="510" r="2.700" fill="none" stroke="#222"/>
<rect x="1263.500" y="501.500" width="10" height="12" fill="#a0a0a0" stroke="#111"/><rect x="1263" y="501" width="11" height="2" fill="#111"/><path d="M1265.500 508H1271.500M1268.500 505V511" stroke="#111"/>
<circle cx="965" cy="531" r="10" fill="url(#sph)"/>
<circle cx="1239" cy="595" r="6.500" fill="url(#sph)"/>
<path d="M1254 593 1258 596 1254 599Z" fill="#d0d0d0"/>
<path d="M1269 569 1272 575H1266Z" fill="#ccc"/><path d="M1269 762 1272 757H1266Z" fill="#ccc"/>

<!-- attrib radio dots -->
<g fill="none" stroke="#111">
<circle cx="959" cy="596" r="2"/><circle cx="959" cy="616" r="2"/><circle cx="959" cy="635" r="2"/><circle cx="959" cy="654" r="2"/><circle cx="959" cy="680" r="2"/><circle cx="959" cy="706" r="2"/><circle cx="959" cy="724" r="2"/><circle cx="959" cy="750" r="2"/><circle cx="959" cy="767" r="2"/>
<circle cx="1125" cy="680" r="2"/><circle cx="1125" cy="706" r="2"/><circle cx="1125" cy="724" r="2"/>
</g>
<path d="M969 592 973 596 969 600Z" fill="#222"/>

<!-- timeline extras -->
<path d="M126 609 133 605V613Z" fill="#c8c8c8"/><path d="M531 609 524 605V613Z" fill="#c8c8c8"/>
<!-- transport -->
<g fill="#444"><rect x="621" y="604" width="2" height="10"/><path d="M629 604 624 609 629 614ZM634 604 629 609 634 614Z"/><path d="M646 604 640 609 646 614Z"/><path d="M648 604Q646 609 648 614" fill="none" stroke="#444"/><path d="M702 604 708 609 702 614Z"/><path d="M700 604Q702 609 700 614" fill="none" stroke="#444"/><path d="M721 604 726 609 721 614ZM726 604 731 609 726 614Z"/><rect x="731" y="604" width="2" height="10"/></g>
<path d="M671 603 661 609 671 615Z" fill="#40e090" stroke="#224"/><path d="M682 603 692 609 682 615Z" fill="#40e090" stroke="#224"/>
<g stroke="#333" fill="#e84c50"><circle cx="752" cy="609" r="7"/><circle cx="772" cy="609" r="7"/><circle cx="792" cy="609" r="7"/></g>
<path d="M749 612 755 606" stroke="#222" stroke-width="2"/><circle cx="772" cy="609" r="3.500" fill="none" stroke="#222" stroke-width="1.400"/><text x="792" y="613" text-anchor="middle" font-family="Liberation Sans" font-size="11" font-weight="bold" fill="#222">?</text>
<g transform="translate(818 609) scale(.8)"><use href="#mv"/></g>
<rect x="832" y="603" width="12" height="12" fill="#f08a28" stroke="#444"/><path d="M832 609H838V615" fill="none" stroke="#444"/>
<circle cx="858" cy="609" r="5.500" fill="none" stroke="#e8842c" stroke-width="2.200"/>
<circle cx="878" cy="609" r="6.500" fill="#ddd" stroke="#b4662a" stroke-width="1.600"/><text x="878" y="612.500" text-anchor="middle" font-family="Liberation Sans" font-size="9" font-weight="bold" fill="#222">P</text>
<g fill="#e8842c"><circle cx="893" cy="604" r="1.300"/><circle cx="898" cy="604" r="1.300"/><circle cx="903" cy="604" r="1.300"/></g><g fill="#2c2c2c"><circle cx="893" cy="609" r="1.300"/><circle cx="898" cy="609" r="1.300"/><circle cx="903" cy="609" r="1.300"/><circle cx="893" cy="614" r="1.300"/><circle cx="898" cy="614" r="1.300"/><circle cx="903" cy="614" r="1.300"/></g>
<path d="M913 611 918 606V614ZM913 611H916V614Z" fill="#222"/><path d="M921 605Q924 609 921 613" fill="none" stroke="#ddd"/>
<rect x="931.500" y="605.500" width="8" height="10" fill="#eee" stroke="#555"/><rect x="939" y="602" width="6" height="6" fill="#b5753a"/><path d="M946 612V618H940Z" fill="#222"/>

<!-- taskbar icons -->
<g transform="translate(-27 -2)"><path d="M41 781 Q46 779 50 781L48 788Q44 786 39 788Z" fill="#e8482c"/><path d="M51 781Q55 783 59 781L57 788Q53 790 49 788Z" fill="#5cc030"/><path d="M39 789Q43 787 47 789L45 796Q41 794 37 796Z" fill="#3c82f0"/><path d="M48 789Q52 791 56 789L54 796Q50 798 46 796Z" fill="#f8c820"/></g>
<circle cx="124" cy="785" r="7" fill="url(#glb)" stroke="#e8f0ff"/><path d="M118 781Q124 776 130 781" fill="none" stroke="#fff"/>
<rect x="277" y="781" width="14" height="10" fill="#f0c060" stroke="#905818"/><rect x="280" y="778" width="8" height="7" fill="#e8f0f8" stroke="#4060a0"/><rect x="282" y="780" width="4" height="3" fill="#e06040"/>
<path d="M437 781H443L445 783H451V792H437Z" fill="#f4d070" stroke="#905818"/><path d="M437 792 440 785H453L450 792Z" fill="#fae090" stroke="#905818"/>
<circle cx="604" cy="785" r="6.500" fill="none" stroke="#2a9ae0" stroke-width="2.500"/><path d="M598 785H610" stroke="#2a9ae0" stroke-width="2"/><path d="M597 793Q596 786 604 780Q610 776 613 778" fill="none" stroke="#f0b030" stroke-width="1.300"/>
<circle cx="764" cy="785" r="6.500" fill="none" stroke="#2a9ae0" stroke-width="2.500"/><path d="M758 785H770" stroke="#2a9ae0" stroke-width="2"/><path d="M757 793Q756 786 764 780Q770 776 773 778" fill="none" stroke="#f0b030" stroke-width="1.300"/>
<circle cx="1116" cy="782" r="4.500" fill="#cfe0f4" stroke="#2a5ab0" stroke-width="1.800"/><path d="M1113 786 1109 791" stroke="#2a5ab0" stroke-width="2.400"/>
<circle cx="1151" cy="785" r="8.500" fill="#2a78e0" stroke="#cfe4fa" stroke-width="1.200"/><path d="M1153 781 1149 785 1153 789" fill="none" stroke="#fff" stroke-width="2"/>
<rect x="1163" y="777" width="15" height="15" fill="#fff" stroke="#888"/><circle cx="1170.500" cy="784.500" r="4.500" fill="none" stroke="#1a9a80" stroke-width="2.400"/>
<circle cx="1187" cy="785" r="6.500" fill="#8a8a8a" stroke="#444"/><circle cx="1187" cy="785" r="2.500" fill="#ccc"/>
<path d="M1205 776Q1212 777 1212 785 1212 793 1205 794 1198 793 1198 785 1198 777 1205 776Z" fill="#0a1ea0"/><path d="M1202 781 1208 788 1205 791V779L1208 782 1202 789" fill="none" stroke="#e83030" stroke-width="1.100"/>
<path d="M1216 781Q1223 775 1231 781" fill="none" stroke="#f0e040" stroke-width="2"/><path d="M1219 784Q1223 781 1228 784" fill="none" stroke="#f0e040" stroke-width="2"/><rect x="1222" y="785" width="3" height="7" fill="#fff" stroke="#555" stroke-width=".5"/>
</svg>
<!-- XYZ letters as text above -->
<i class="t" style="left:254px;top:58px;font:bold 14px/14px 'Liberation Sans',sans-serif;color:#222">X</i>
<i class="t" style="left:282px;top:58px;font:bold 14px/14px 'Liberation Sans',sans-serif;color:#222">Y</i>
<i class="t" style="left:311px;top:58px;font:bold 14px/14px 'Liberation Sans',sans-serif;color:#222">Z</i>
</body></html>
